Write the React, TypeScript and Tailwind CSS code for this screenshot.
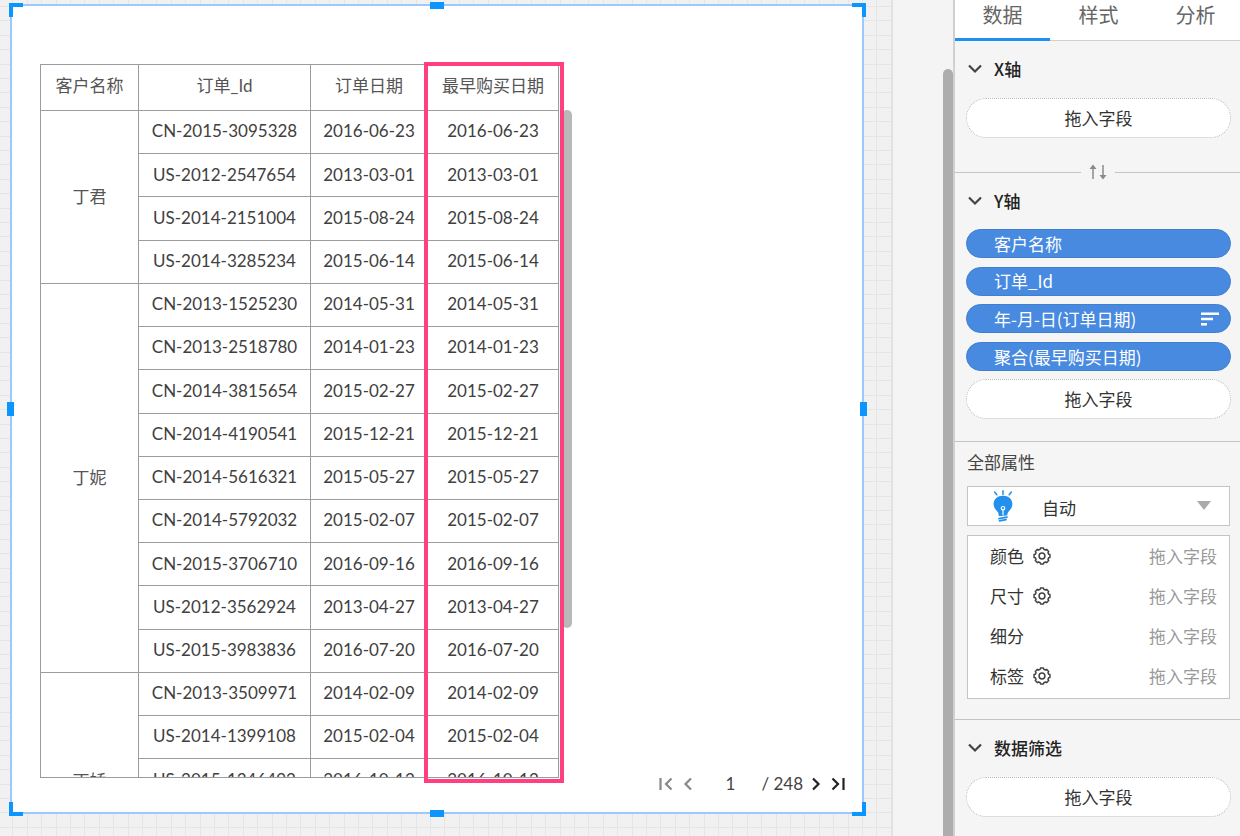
import React from "react";

type Row = { id: string; ordered: string; first: string };
type Group = { name: string; rows: Row[] };

const row = (id: string, date: string): Row => ({ id, ordered: date, first: date });

const groups: Group[] = [
  {
    name: "丁君",
    rows: [
      row("CN-2015-3095328", "2016-06-23"),
      row("US-2012-2547654", "2013-03-01"),
      row("US-2014-2151004", "2015-08-24"),
      row("US-2014-3285234", "2015-06-14"),
    ],
  },
  {
    name: "丁妮",
    rows: [
      row("CN-2013-1525230", "2014-05-31"),
      row("CN-2013-2518780", "2014-01-23"),
      row("CN-2014-3815654", "2015-02-27"),
      row("CN-2014-4190541", "2015-12-21"),
      row("CN-2014-5616321", "2015-05-27"),
      row("CN-2014-5792032", "2015-02-07"),
      row("CN-2015-3706710", "2016-09-16"),
      row("US-2012-3562924", "2013-04-27"),
      row("US-2015-3983836", "2016-07-20"),
    ],
  },
  {
    name: "丁娇",
    rows: [
      row("CN-2013-3509971", "2014-02-09"),
      row("US-2014-1399108", "2015-02-04"),
      row("US-2015-1346492", "2016-10-12"),
      row("", ""),
      row("", ""),
    ],
  },
];

const GEAR_PATH = (() => {
  const teeth = 8;
  const pts: string[] = [];
  for (let i = 0; i < teeth; i++) {
    const base = (i * 2 * Math.PI) / teeth;
    const profile: [number, number][] = [
      [-0.27, 6.9],
      [-0.19, 8.1],
      [0.19, 8.1],
      [0.27, 6.9],
    ];
    for (const [a, r] of profile) {
      const t = base + a;
      pts.push(`${(10 + r * Math.sin(t)).toFixed(2)} ${(10 - r * Math.cos(t)).toFixed(2)}`);
    }
  }
  return `M${pts.join("L")}Z`;
})();

function Gear() {
  return (
    <svg viewBox="0 0 20 20" className="size-5" fill="none" stroke="#444" strokeWidth="1.5" strokeLinejoin="round">
      <path d={GEAR_PATH} />
      <circle cx="10" cy="10" r="2.9" />
    </svg>
  );
}

function Bulb() {
  return (
    <svg viewBox="0 0 20 32" className="h-8 w-5" fill="none">
      <g stroke="#2490ee" strokeWidth="1.5" strokeLinecap="round">
        <path d="M10 .8v3.6M1.6 2l2.2 2.8M18.4 2l-2.2 2.8" />
      </g>
      <path
        fill="#2490ee"
        d="M10 5.8C4.6 5.8.6 9.300.6 14c0 3 1.500 5.200 3.300 7 1.300 1.400 1.800 2.600 1.900 5h8.400c.1-2.400.6-3.600 1.900-5 1.800-1.800 3.300-4 3.300-7C19.400 9.300 15.400 5.800 10 5.800Z"
      />
      <circle cx="10" cy="18.200" r="1.700" stroke="#fff" strokeWidth="1.200" />
      <path d="M10 20v5.500" stroke="#fff" strokeWidth="1.200" />
      <path d="M5.600 27.200 14.400 25.800" stroke="#fff" strokeWidth="1" />
      <path d="M6 28.600 14 27.200M6.500 30.800l6.500-1.200" stroke="#2490ee" strokeWidth="1.700" strokeLinecap="round" />
    </svg>
  );
}

function Section({ title }: { title: string }) {
  return (
    <button type="button" className="flex h-6 items-center gap-3 pl-[13px] text-[17px] font-medium text-[#222]">
      <svg viewBox="0 0 14 10" className="h-[10px] w-[14px]" fill="none" stroke="#444" strokeWidth="2.2">
        <path d="M1 1.500l6 6 6-6" />
      </svg>
      {title}
    </button>
  );
}

function DropZone() {
  return (
    <div className="mr-[9px] ml-[11px] flex h-10 items-center justify-center rounded-full border border-dotted border-[#bbb] bg-white text-[17px] text-[#333]">
      拖入字段
    </div>
  );
}

function Pill({ label, sorted }: { label: string; sorted?: boolean }) {
  return (
    <li className="flex h-[29px] items-center justify-between rounded-full border border-[#3f7fd2] bg-[#488ae0] pr-[11px] pl-[27px] text-[17px] text-white">
      {label}
      {sorted && (
        <svg viewBox="0 0 18 14" className="h-[14px] w-[18px]" fill="#fff">
          <path d="M0 .5h18v2.500H0zM0 5.700h12v2.500H0zM0 11h6v2.500H0z" />
        </svg>
      )}
    </li>
  );
}

function Property({ label, gear }: { label: string; gear?: boolean }) {
  return (
    <li className="flex h-10 items-center gap-2 pr-3 pl-[22px] text-[17px] text-[#333]">
      {label}
      {gear && (
        <button type="button" aria-label={`${label}设置`}>
          <Gear />
        </button>
      )}
      <span className="ml-auto text-[#999]">拖入字段</span>
    </li>
  );
}

function PagerButton({ label, d, dim, wide }: { label: string; d: string; dim?: boolean; wide?: boolean }) {
  return (
    <button type="button" aria-label={label} disabled={dim} className={dim ? "text-[#888]" : "text-[#222]"}>
      <svg
        viewBox={wide ? "0 0 14 14" : "0 0 10 14"}
        className={wide ? "h-[14px] w-[14px]" : "h-[14px] w-[10px]"}
        fill="none"
        stroke="currentColor"
        strokeWidth="2.200"
      >
        <path d={d} />
      </svg>
    </button>
  );
}

const cell = "border border-[#9c9c9c] p-0 text-center";

function DataTable() {
  return (
    <table className="h-[825px] w-[519px] table-fixed border-collapse text-[17px] text-[#404040]">
      <colgroup>
        <col className="w-[98px]" />
        <col className="w-[172px]" />
        <col className="w-[117px]" />
        <col className="w-[131px]" />
      </colgroup>
      <thead>
        <tr className="h-[46px] text-[#555]">
          {["客户名称", "订单_Id", "订单日期", "最早购买日期"].map((h) => (
            <th key={h} className={`${cell} pb-[3px] font-normal`}>
              {h}
            </th>
          ))}
        </tr>
      </thead>
      <tbody>
        {groups.map((g) =>
          g.rows.map((r, i) => (
            <tr key={`${g.name}${i}`} className="h-[43px]">
              {i === 0 && (
                <td rowSpan={g.rows.length} className={`${cell} text-[#555]`}>
                  {g.name}
                </td>
              )}
              <td className={`${cell} pb-[2px]`}>{r.id}</td>
              <td className={`${cell} pb-[2px]`}>{r.ordered}</td>
              <td className={`${cell} pb-[2px]`}>{r.first}</td>
            </tr>
          )),
        )}
      </tbody>
    </table>
  );
}

function Handles() {
  return (
    <>
      <i className="absolute -top-[3px] -left-[3px] size-[14px] border-t-4 border-l-4 border-[#0a95ff]" />
      <i className="absolute -top-[3px] -right-1 size-[14px] border-t-4 border-r-4 border-[#0a95ff]" />
      <i className="absolute -bottom-1 -left-[3px] size-[14px] border-b-4 border-l-4 border-[#0a95ff]" />
      <i className="absolute -right-1 -bottom-1 size-[14px] border-r-4 border-b-4 border-[#0a95ff]" />
      <i className="absolute -top-1 left-1/2 h-[7px] w-[14px] -translate-x-1/2 bg-[#0a95ff]" />
      <i className="absolute -bottom-[5px] left-1/2 h-[7px] w-[14px] -translate-x-1/2 bg-[#0a95ff]" />
      <i className="absolute top-1/2 -left-[5px] h-[14px] w-[7px] -translate-y-1/2 bg-[#0a95ff]" />
      <i className="absolute top-1/2 -right-[5px] h-[14px] w-[7px] -translate-y-1/2 bg-[#0a95ff]" />
    </>
  );
}

function Canvas() {
  return (
    <main className="relative flex min-w-0 flex-1 flex-col border-r-2 border-[#e2e2e2] bg-[#f1f1f1] pt-1 pr-[27px] pb-[22px] pl-[10px]">
      <svg className="absolute inset-0 size-full" aria-hidden="true">
        <defs>
          <pattern id="grid" x="-2" y="6" width="72" height="72" patternUnits="userSpaceOnUse">
            <path
              d="M.5 0v72M14.500 0v72M29.500 0v72M43.500 0v72M58.500 0v72M0 .5h72M0 14.500h72M0 29.500h72M0 43.500h72M0 58.500h72"
              stroke="#e5e5e5"
              fill="none"
            />
          </pattern>
        </defs>
        <rect width="100%" height="100%" fill="url(#grid)" />
      </svg>
      <section className="relative flex min-h-0 flex-1 items-end border-2 border-[#9cc8fb] bg-white pt-[58px] pr-[17px] pb-4 pl-7 font-[Lato,'Noto_Sans_CJK_SC',sans-serif]">
        <Handles />
        <div className="relative mb-[18px] self-stretch">
          <div className="h-full overflow-hidden border-b border-[#9c9c9c]">
            <DataTable />
          </div>
          <div className="absolute top-[46px] -right-[13px] h-[518px] w-[10px] rounded-md bg-[#b8b8b8]" />
          <div className="absolute -top-[2px] -right-[5px] -bottom-[5px] w-[140px] border-4 border-[#ff3f80]" />
        </div>
        <nav aria-label="分页" className="ml-auto flex h-6 items-center text-[17px] text-[#444]">
          <div className="flex items-center gap-[10px]">
            <PagerButton label="第一页" d="M1.500 1v12M12.500 1.500L7 7l5.500 5.500" dim wide />
            <PagerButton label="上一页" d="M8 1.500L2.500 7 8 12.500" dim />
          </div>
          <input aria-label="页码" defaultValue="1" className="ml-[14px] w-[46px] bg-transparent text-center outline-none" />
          <span className="ml-2">/ 248</span>
          <div className="ml-2 flex items-center gap-[10px]">
            <PagerButton label="下一页" d="M2 1.500L7.500 7 2 12.500" />
            <PagerButton label="最后一页" d="M1.500 1.500L7 7l-5.500 5.500M12.500 1v12" wide />
          </div>
        </nav>
      </section>
    </main>
  );
}

function Sidebar() {
  return (
    <aside className="flex w-[287px] shrink-0 flex-col border-l-2 border-[#d0d0d0] bg-[#f5f5f5]">
      <div role="tablist" className="flex h-[41px] shrink-0 border-b border-[#d0d0d0] bg-white text-xl text-[#666]">
        {["数据", "样式", "分析"].map((t, i) => (
          <button
            key={t}
            type="button"
            role="tab"
            aria-selected={i === 0}
            className={
              i === 0
                ? "-mb-px w-[95px] shrink-0 border-b-3 border-[#1e8ff5] pb-[9px]"
                : "w-[97px] shrink-0 pb-[11px]"
            }
          >
            {t}
          </button>
        ))}
      </div>

      <div className="flex shrink-0 flex-col gap-[17px] pt-4">
        <Section title="X轴" />
        <DropZone />
      </div>

      <div className="mt-[22px] flex h-6 shrink-0 items-center gap-2">
        <span className="h-px flex-1 bg-[#c4c4c4]" />
        <button type="button" aria-label="交换">
          <svg viewBox="0 0 18 16" className="h-4 w-[18px]" fill="none" stroke="#8a8a8a" strokeWidth="1.500">
            <path d="M4 15V3M14 1v12" />
            <path d="M4 .5L7.500 5H.5zM14 15.500L17.500 11h-7z" fill="#8a8a8a" stroke="none" />
          </svg>
        </button>
        <span className="h-px flex-1 bg-[#c4c4c4]" />
      </div>

      <div className="mt-[5px] flex shrink-0 flex-col">
        <Section title="Y轴" />
        <ul className="mt-4 mr-[9px] mb-2 ml-[11px] flex h-[142px] flex-col justify-between">
          <Pill label="客户名称" />
          <Pill label="订单_Id" />
          <Pill label="年-月-日(订单日期)" sorted />
          <Pill label="聚合(最早购买日期)" />
        </ul>
        <DropZone />
      </div>

      <div className="mt-[22px] shrink-0 border-t border-[#c4c4c4] pt-2 pr-[10px] pb-5 pl-3">
        <label htmlFor="mark" className="block h-6 text-[17px] leading-6 text-[#444]">
          全部属性
        </label>
        <div className="relative mt-3">
          <select
            id="mark"
            className="h-10 w-full appearance-none border border-[#c4c4c4] bg-white pt-1 pl-[74px] text-[17px] text-[#333]"
          >
            <option>自动</option>
          </select>
          <span className="pointer-events-none absolute top-1 left-[26px]">
            <Bulb />
          </span>
          <svg viewBox="0 0 14 9" className="pointer-events-none absolute top-[15px] right-[19px] h-[9px] w-[14px]" fill="#aaa">
            <path d="M0 0h14L7 9z" />
          </svg>
        </div>
        <ul className="mt-[9px] border border-[#c4c4c4] bg-white pb-[2px]">
          <Property label="颜色" gear />
          <Property label="尺寸" gear />
          <Property label="细分" />
          <Property label="标签" gear />
        </ul>
      </div>

      <div className="flex shrink-0 flex-col gap-[17px] border-t border-[#c4c4c4] pt-4">
        <Section title="数据筛选" />
        <DropZone />
      </div>
    </aside>
  );
}

export default function App() {
  return (
    <div className="flex h-screen overflow-hidden bg-[#f4f4f4] font-['Noto_Sans_CJK_SC',sans-serif]">
      <Canvas />
      <div className="flex w-[60px] shrink-0 justify-end pt-[69px]">
        <div className="w-[10px] rounded-t-full bg-[#adadad]" />
      </div>
      <Sidebar />
    </div>
  );
}
